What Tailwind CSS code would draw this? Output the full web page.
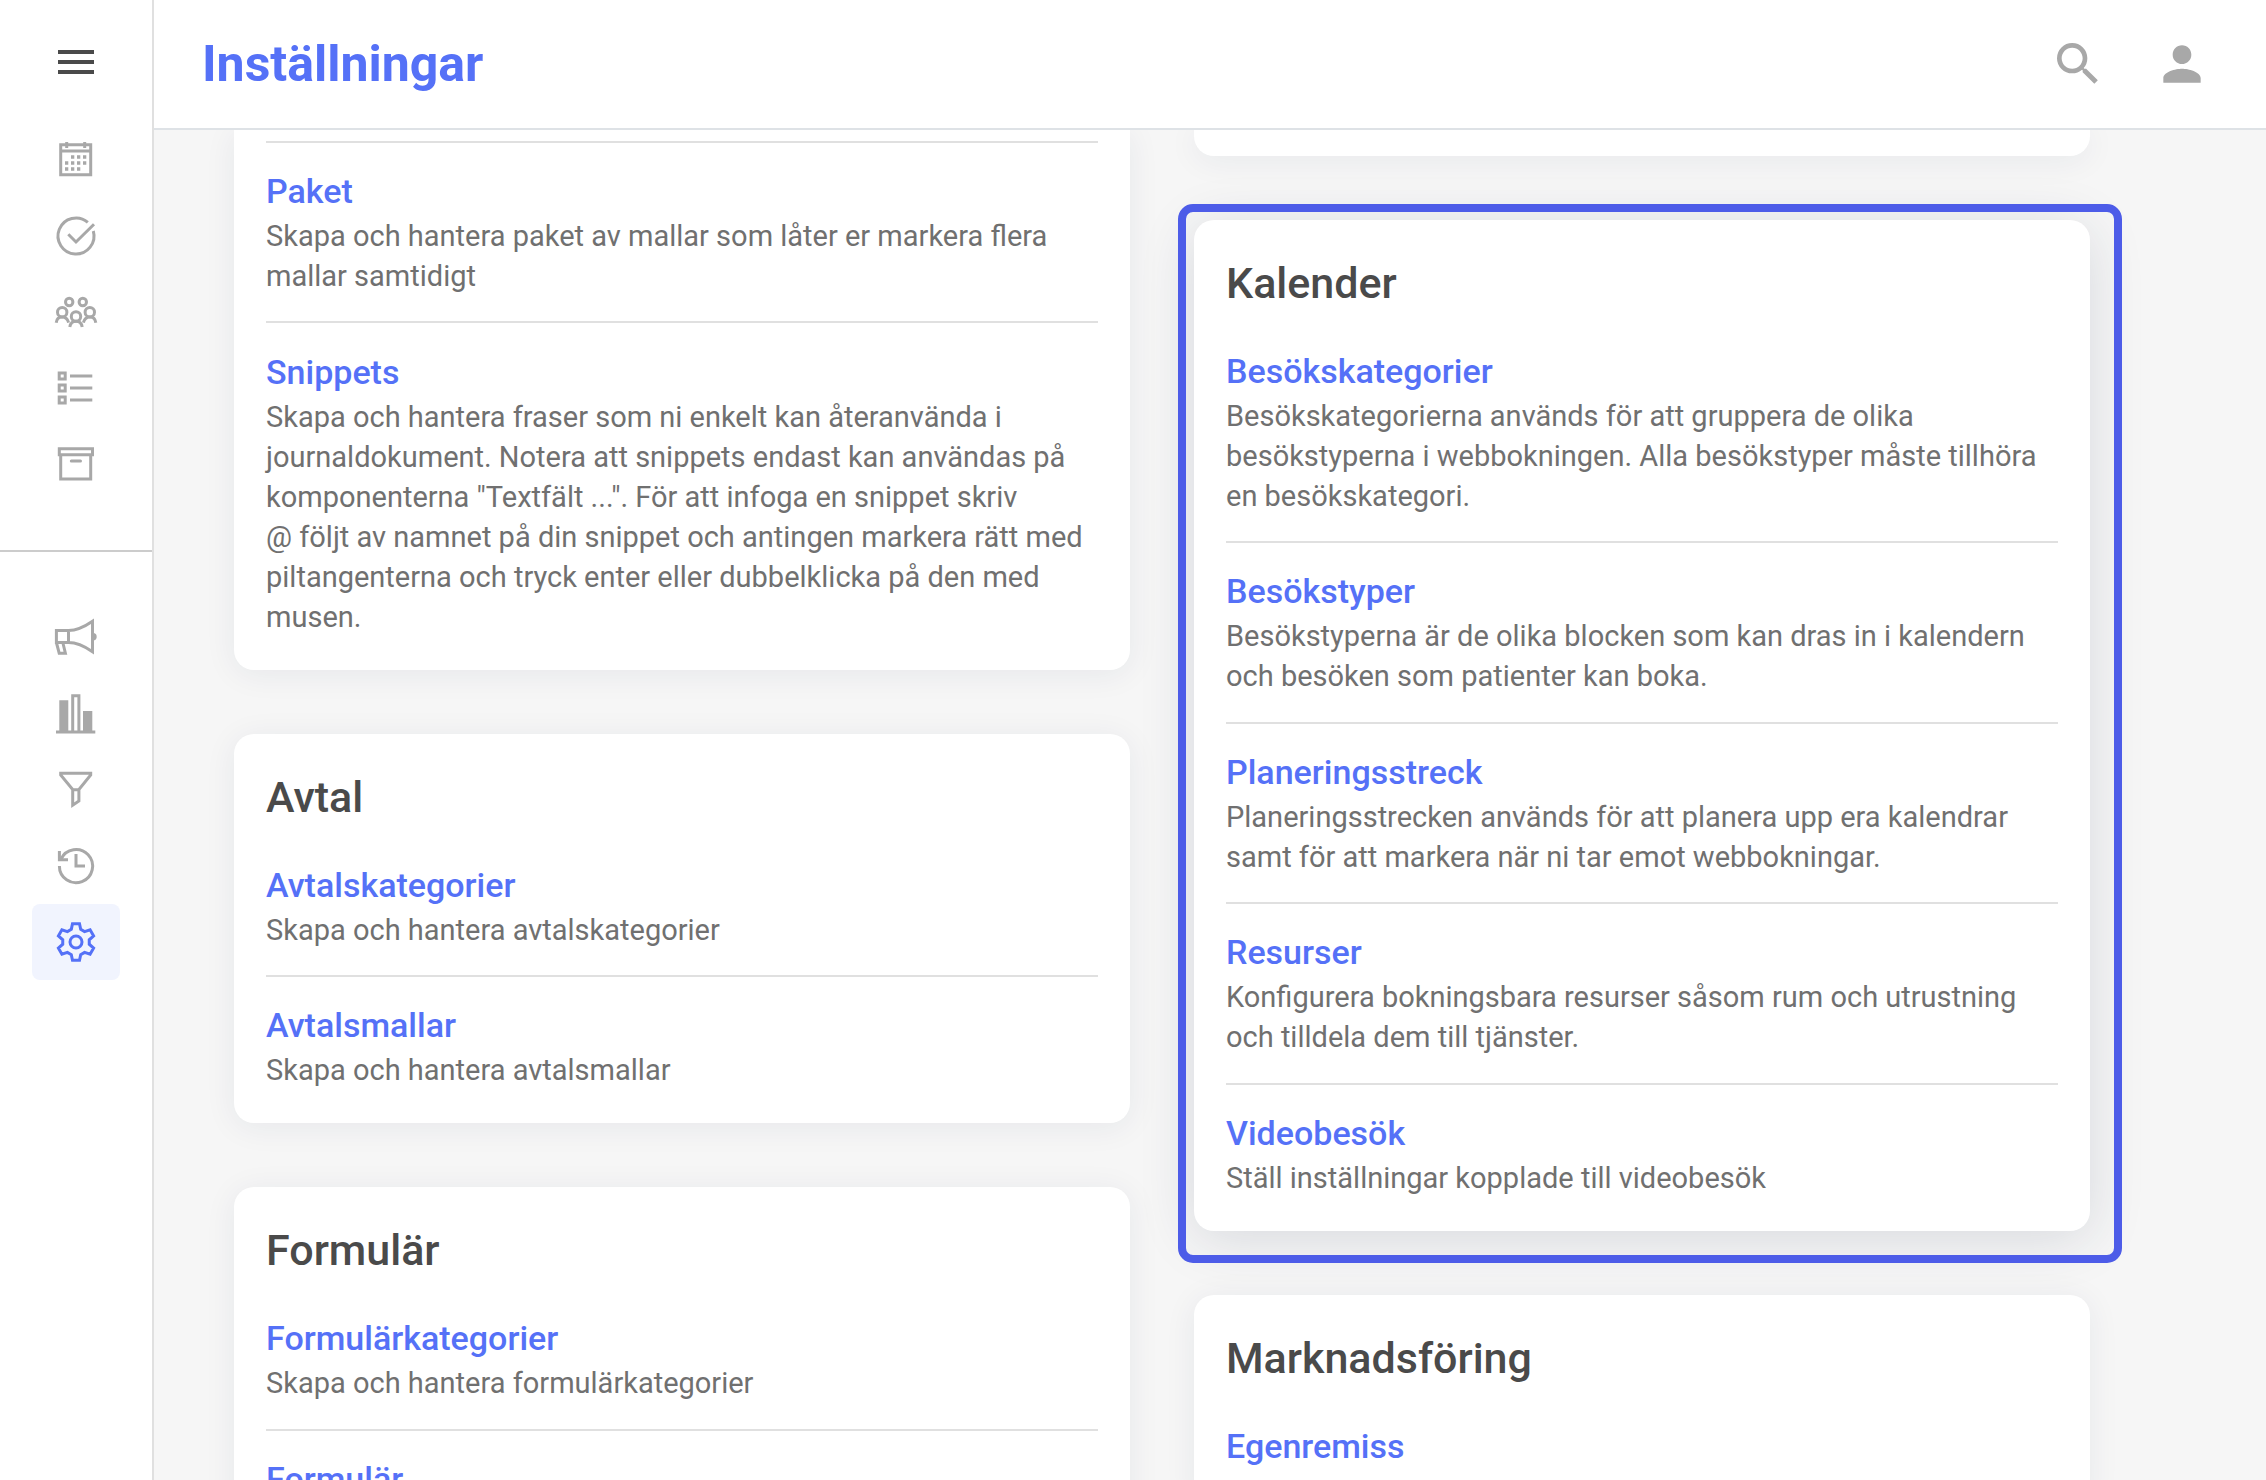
<!DOCTYPE html>
<html lang="sv">
<head>
  <meta charset="UTF-8">
  <meta name="viewport" content="width=device-width, initial-scale=1.0">
  <title>Inställningar</title>
  <script src="https://cdn.jsdelivr.net/npm/@tailwindcss/browser@4"></script>
</head>
<body class="flex h-screen overflow-hidden bg-[#f6f6f6] font-['Roboto',sans-serif] text-[29px] leading-10 text-[#707070]">
  <!-- Sidomeny -->
  <aside class="w-[154px] shrink-0 bg-white border-r-2 border-[#e0e0e0]">
    <div class="h-[122px] pt-0.5 flex justify-center items-center">
      <button type="button" aria-label="Meny" class="flex flex-col gap-[6px] w-9">
        <span class="h-1 w-full bg-[#4a4a4a]"></span>
        <span class="h-1 w-full bg-[#4a4a4a]"></span>
        <span class="h-1 w-full bg-[#4a4a4a]"></span>
      </button>
    </div>

    <nav class="flex flex-col items-center pb-12 text-[#a8a8a8] border-b-2 border-[#cccccc]">
      <a href="#" aria-label="Kalender" class="w-[88px] h-[76px] rounded-lg flex items-center justify-center">
        <svg class="size-11" viewBox="0 0 44 44" fill="none" stroke="currentColor" stroke-width="3">
          <path d="M6.7 6.7H36.7V36.7H6.7ZM6.7 13H36.7M12.7 4V10M30.7 4V10"/>
          <path stroke-width="3.3" stroke-dasharray="3.3 2.7" d="M17 19H33M11 25H33M11 31H27"/>
        </svg>
      </a>
      <a href="#" aria-label="Uppgifter" class="w-[88px] h-[76px] rounded-lg flex items-center justify-center">
        <svg class="size-11" viewBox="0 0 44 44" fill="none" stroke="currentColor" stroke-width="3">
          <path d="M39.3 17A18 18 0 1 1 33.8 8.4"/>
          <path d="M14.3 20.3L22 28L40 10.3"/>
        </svg>
      </a>
      <a href="#" aria-label="Patienter" class="w-[88px] h-[76px] rounded-lg flex items-center justify-center">
        <svg class="size-11" viewBox="0 0 44 44" fill="none" stroke="currentColor" stroke-width="3">
          <circle cx="15.2" cy="12" r="3.7"/>
          <circle cx="28.8" cy="12" r="3.7"/>
          <circle cx="8.2" cy="22.2" r="4.7"/>
          <circle cx="35.8" cy="22.2" r="4.7"/>
          <circle cx="22" cy="26.5" r="4.7"/>
          <path d="M2.2 32.7C2.6 29.4 4.6 27 8.2 27S13.8 29.4 14.6 32.7M29.4 32.7C30.2 29.4 32.2 27 35.8 27S41.4 29.4 41.8 32.7M15.8 37C16.4 33.6 18.4 31.3 22 31.3S27.6 33.6 28.2 37"/>
        </svg>
      </a>
      <a href="#" aria-label="Listor" class="w-[88px] h-[76px] rounded-lg flex items-center justify-center">
        <svg class="size-11" viewBox="0 0 44 44" fill="none" stroke="currentColor" stroke-width="3">
          <path d="M5.2 7H11.2V13H5.2ZM5.2 19H11.2V25H5.2ZM5.2 31H11.2V37H5.2ZM16 10H38.3M16 22H38.3M16 34H38.3"/>
        </svg>
      </a>
      <a href="#" aria-label="Arkiv" class="w-[88px] h-[76px] rounded-lg flex items-center justify-center">
        <svg class="size-11" viewBox="0 0 44 44" fill="none" stroke="currentColor" stroke-width="3">
          <path d="M5.3 6.7H38.5V12.7H5.3ZM6.7 12.7V37H36.7V12.7"/>
          <path stroke-linecap="round" d="M17.3 19H26.5"/>
        </svg>
      </a>
    </nav>

    <nav class="flex flex-col items-center pt-12 text-[#a8a8a8]">
      <a href="#" aria-label="Utskick" class="w-[88px] h-[76px] rounded-lg flex items-center justify-center">
        <svg class="size-11" viewBox="0 0 44 44" fill="none" stroke="currentColor" stroke-width="3">
          <path d="M14.5 14.5H2.4V26.5H14.5ZM14.5 14.5C24 14.5 31 10.5 38.5 5.3V35.7C31 30.5 24 26.5 14.5 26.5M2.4 26.5L5.2 37.2H11.4L8.8 26.5"/>
          <path stroke="none" fill="currentColor" d="M39 17A3.7 3.7 0 0 1 39 24.4Z"/>
        </svg>
      </a>
      <a href="#" aria-label="Statistik" class="w-[88px] h-[76px] rounded-lg flex items-center justify-center">
        <svg class="size-11" viewBox="0 0 44 44" fill="none" stroke="currentColor" stroke-width="3">
          <path stroke="none" fill="currentColor" d="M5.3 8.2H14.3V40H5.3ZM29 19H38.3V40H29Z"/>
          <path d="M18.7 40V3.7H24.9V40M2 40H41.3"/>
        </svg>
      </a>
      <a href="#" aria-label="Filter" class="w-[88px] h-[76px] rounded-lg flex items-center justify-center">
        <svg class="size-11" viewBox="0 0 44 44" fill="none" stroke="currentColor" stroke-width="3">
          <path d="M6.7 5.3H36.7V7L24.9 21.5V33L18.7 37.2V21.5L6.7 7ZM18.7 21.7H24.9"/>
        </svg>
      </a>
      <a href="#" aria-label="Historik" class="w-[88px] h-[76px] rounded-lg flex items-center justify-center">
        <svg class="size-11" viewBox="0 0 44 44" fill="none" stroke="currentColor" stroke-width="3">
          <path d="M5.4 22A16.6 16.6 0 1 0 7 15"/>
          <path d="M5.4 7V15.8H14M22 10V22H31"/>
        </svg>
      </a>
      <a href="#" aria-label="Inställningar" class="w-[88px] h-[76px] rounded-lg flex items-center justify-center bg-[#f1f4fe] text-[#5571f7]">
        <svg class="size-11" viewBox="0 0 44 44" fill="none" stroke="currentColor" stroke-width="3">
          <g transform="translate(22 22)">
            <circle r="6"/>
            <path d="M-4.7 -12.6L-3.5 -18.3H3.5L4.7 -12.6L8.56 -10.37L14.1 -12.18L17.6 -6.12L13.26 -2.23V2.23L17.6 6.12L14.1 12.18L8.56 10.37L4.7 12.6L3.5 18.3H-3.5L-4.7 12.6L-8.56 10.37L-14.1 12.18L-17.6 6.12L-13.26 2.23V-2.23L-17.6 -6.12L-14.1 -12.18L-8.56 -10.37Z"/>
          </g>
        </svg>
      </a>
    </nav>
  </aside>

  <div class="flex-1 min-w-0 flex flex-col">
    <!-- Sidhuvud -->
    <header class="h-[130px] shrink-0 flex items-center justify-between pl-12 pr-14 bg-white border-b-2 border-[#dee2e6]">
      <h1 class="text-[50px] leading-[60px] font-bold text-[#5571f7]">Inställningar</h1>
      <div class="flex gap-12 text-[#a8a8a8]">
        <button type="button" aria-label="Sök">
          <svg class="size-14" viewBox="0 0 24 24" fill="currentColor"><path d="M15.5 14h-.79l-.28-.27A6.47 6.47 0 0 0 16 9.5 6.5 6.5 0 1 0 9.5 16c1.61 0 3.09-.59 4.23-1.57l.27.28v.79l5 4.99L20.49 19l-4.99-5zm-6 0C7.01 14 5 11.99 5 9.5S7.01 5 9.5 5 14 7.01 14 9.5 11.99 14 9.5 14z"/></svg>
        </button>
        <button type="button" aria-label="Konto">
          <svg class="size-14" viewBox="0 0 24 24" fill="currentColor"><path d="M12 12c2.21 0 4-1.79 4-4s-1.79-4-4-4-4 1.79-4 4 1.79 4 4 4zm0 2c-2.67 0-8 1.34-8 4v2h16v-2c0-2.66-5.33-4-8-4z"/></svg>
        </button>
      </div>
    </header>

    <!-- Innehåll -->
    <main class="flex-1 min-h-0 overflow-hidden grid grid-cols-2 items-start gap-16 pl-20 pr-44">
      <div class="flex flex-col gap-16">
        <section class="px-8 pt-[11px] pb-[33px] bg-white rounded-b-[20px] shadow-[0_4px_32px_rgba(30,40,80,0.07)]">
          <div class="pt-[23px] pb-[25px] border-t-2 border-[#e0e0e0]">
            <a href="#" class="block text-[34px] leading-[50px] font-medium text-[#5571f7]">Paket</a>
            <p>Skapa och hantera paket av mallar som låter er markera flera mallar samtidigt</p>
          </div>
          <div class="pt-6 border-t-2 border-[#e0e0e0]">
            <a href="#" class="block text-[34px] leading-[50px] font-medium text-[#5571f7]">Snippets</a>
            <p>Skapa och hantera fraser som ni enkelt kan återanvända i journaldokument. Notera att snippets endast kan användas på komponenterna "Textfält ...". För att infoga en snippet skriv @&nbsp;följt av namnet på din snippet och antingen markera rätt med piltangenterna och tryck enter eller dubbelklicka på den med musen.</p>
          </div>
        </section>

        <section class="px-8 pt-8 pb-[33px] bg-white rounded-[20px] shadow-[0_4px_32px_rgba(30,40,80,0.07)]">
          <h2 class="mb-2 text-[43px] leading-[62px] font-medium text-[#4a4a4a]">Avtal</h2>
          <div class="pt-6 pb-[25px]">
            <a href="#" class="block text-[34px] leading-[50px] font-medium text-[#5571f7]">Avtalskategorier</a>
            <p>Skapa och hantera avtalskategorier</p>
          </div>
          <div class="pt-[23px] border-t-2 border-[#e0e0e0]">
            <a href="#" class="block text-[34px] leading-[50px] font-medium text-[#5571f7]">Avtalsmallar</a>
            <p>Skapa och hantera avtalsmallar</p>
          </div>
        </section>

        <section class="px-8 pt-8 pb-[33px] bg-white rounded-[20px] shadow-[0_4px_32px_rgba(30,40,80,0.07)]">
          <h2 class="mb-2 text-[43px] leading-[62px] font-medium text-[#4a4a4a]">Formulär</h2>
          <div class="pt-6 pb-[26px]">
            <a href="#" class="block text-[34px] leading-[50px] font-medium text-[#5571f7]">Formulärkategorier</a>
            <p>Skapa och hantera formulärkategorier</p>
          </div>
          <div class="pt-[23px] border-t-2 border-[#e0e0e0]">
            <a href="#" class="block text-[34px] leading-[50px] font-medium text-[#5571f7]">Formulär</a>
          </div>
        </section>
      </div>

      <div class="flex flex-col gap-16">
        <section class="h-[26px] bg-white rounded-b-[20px] shadow-[0_4px_32px_rgba(30,40,80,0.07)]"></section>

        <section class="relative px-8 pt-8 pb-[33px] bg-white rounded-[20px] shadow-[0_8px_56px_rgba(30,40,80,0.14)]">
          <!-- Markering runt kortet -->
          <div class="absolute -top-4 -left-4 -right-8 -bottom-8 border-8 border-[#4d5ce8] rounded-[15px] pointer-events-none"></div>
          <h2 class="mb-2 text-[43px] leading-[62px] font-medium text-[#4a4a4a]">Kalender</h2>
          <div class="pt-6 pb-[25px]">
            <a href="#" class="block text-[34px] leading-[50px] font-medium text-[#5571f7]">Besökskategorier</a>
            <p>Besökskategorierna används för att gruppera de olika besökstyperna i webbokningen. Alla besökstyper måste tillhöra en besökskategori.</p>
          </div>
          <div class="pt-[23px] pb-[26px] border-t-2 border-[#e0e0e0]">
            <a href="#" class="block text-[34px] leading-[50px] font-medium text-[#5571f7]">Besökstyper</a>
            <p>Besökstyperna är de olika blocken som kan dras in i kalendern och besöken som patienter kan boka.</p>
          </div>
          <div class="pt-[23px] pb-[25px] border-t-2 border-[#e0e0e0]">
            <a href="#" class="block text-[34px] leading-[50px] font-medium text-[#5571f7]">Planeringsstreck</a>
            <p>Planeringsstrecken används för att planera upp era kalendrar samt för att markera när ni tar emot webbokningar.</p>
          </div>
          <div class="pt-[23px] pb-[26px] border-t-2 border-[#e0e0e0]">
            <a href="#" class="block text-[34px] leading-[50px] font-medium text-[#5571f7]">Resurser</a>
            <p>Konfigurera bokningsbara resurser såsom rum och utrustning och tilldela dem till tjänster.</p>
          </div>
          <div class="pt-[23px] border-t-2 border-[#e0e0e0]">
            <a href="#" class="block text-[34px] leading-[50px] font-medium text-[#5571f7]">Videobesök</a>
            <p>Ställ inställningar kopplade till videobesök</p>
          </div>
        </section>

        <section class="px-8 pt-8 pb-[33px] bg-white rounded-[20px] shadow-[0_4px_32px_rgba(30,40,80,0.07)]">
          <h2 class="mb-2 text-[43px] leading-[62px] font-medium text-[#4a4a4a]">Marknadsföring</h2>
          <div class="pt-6">
            <a href="#" class="block text-[34px] leading-[50px] font-medium text-[#5571f7]">Egenremiss</a>
          </div>
        </section>
      </div>
    </main>
  </div>
</body>
</html>
